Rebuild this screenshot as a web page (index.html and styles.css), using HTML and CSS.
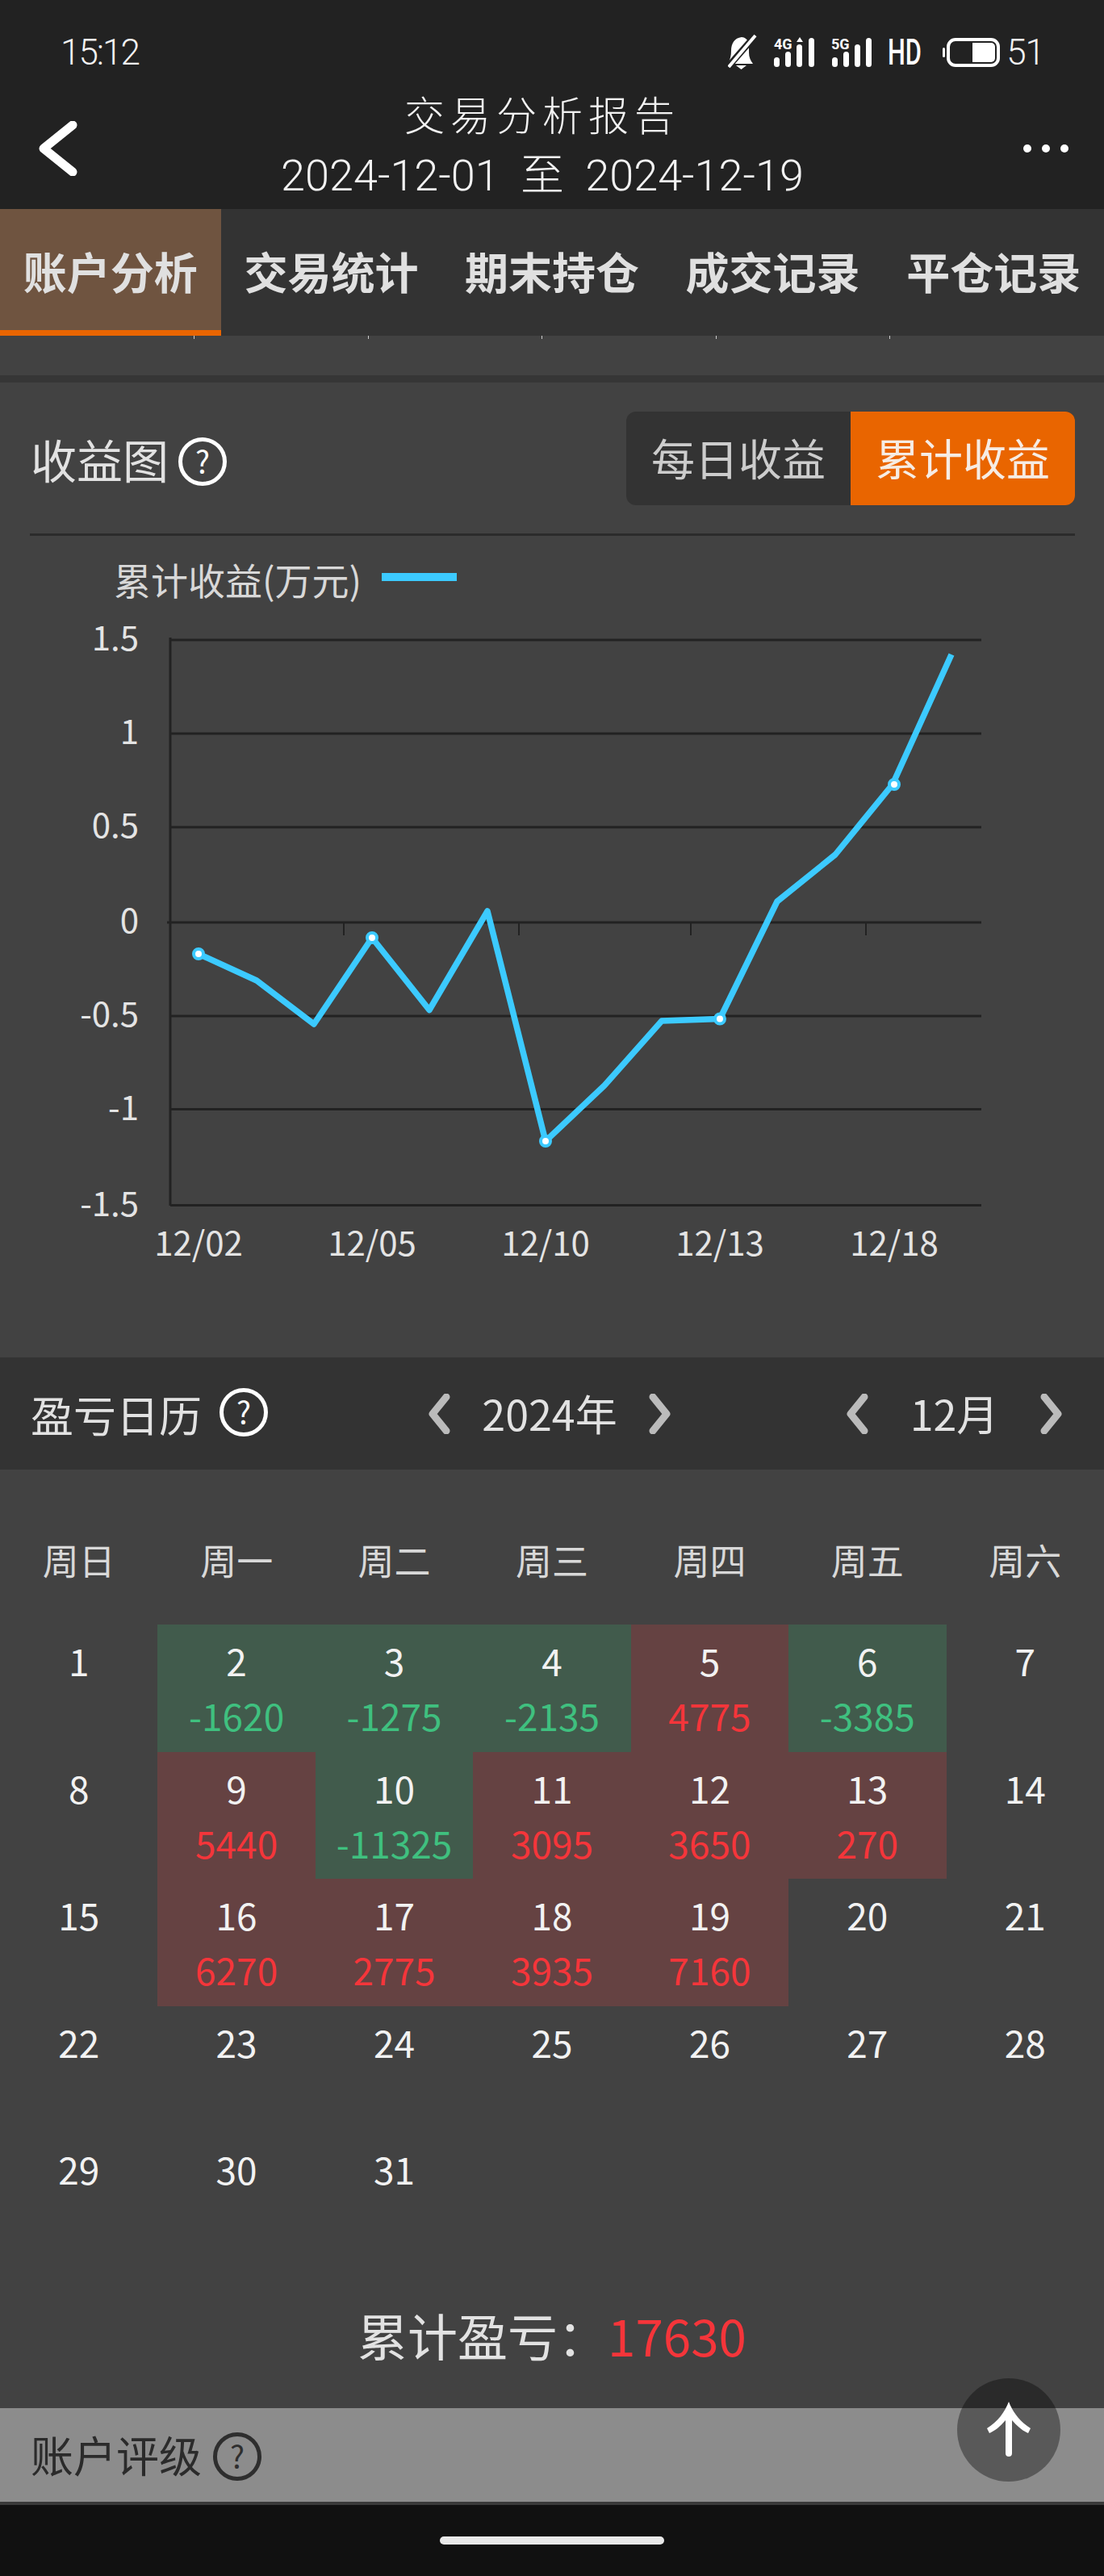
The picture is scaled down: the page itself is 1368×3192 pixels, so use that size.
FILE: index.html
```html
<!DOCTYPE html>
<html>
<head>
<meta name="viewport" content="width=device-width, initial-scale=1">
<link rel="stylesheet" href="styles.css">
</head>
<body>

<!-- Top bar -->
<header class="topbar">
  <div class="status">
    <span class="clock">15:12</span>
    <svg class="status-icons" viewBox="905 40 340 50" width="340" height="50">
      <path class="fill" d="M922 46c-9 1-13 8-13 17 0 6-1 10-4 16h31c-3-4-5-8-5-14l0-12c-2-4-5-7-9-7z"/>
      <path class="fill" d="M915 81h13l-6.500 5z"/>
      <path class="slash" d="M904 84l35-40"/>
      <path class="white-line" d="M906 83l33-39"/>
      <text class="tiny" x="962" y="61">4G</text>
      <path class="fill" d="M990 52l4-6 4 6z"/>
      <rect class="fill" x="962" y="71" width="7" height="12" rx="3.500"/>
      <rect class="fill" x="976" y="64" width="7" height="19" rx="3.500"/>
      <rect class="fill" x="990" y="55" width="7" height="28" rx="3.500"/>
      <rect class="fill" x="1005" y="47" width="7" height="36" rx="3.500"/>
      <text class="tiny" x="1033" y="61">5G</text>
      <rect class="fill" x="1034" y="71" width="7" height="12" rx="3.500"/>
      <rect class="fill" x="1048" y="64" width="7" height="19" rx="3.500"/>
      <rect class="fill" x="1062" y="55" width="7" height="28" rx="3.500"/>
      <rect class="fill" x="1076" y="47" width="7" height="36" rx="3.500"/>
      <text class="hd" x="1103" y="80" textLength="42" lengthAdjust="spacingAndGlyphs">HD</text>
      <rect class="fill" x="1171" y="59" width="3" height="12" rx="1.500"/>
      <rect class="batt" x="1178" y="49" width="62" height="32" rx="9"/>
      <path class="fill" d="M1208 53h23a5 5 0 0 1 5 5v14a5 5 0 0 1-5 5h-23z"/>
    </svg>
    <span class="batt-num">51</span>
  </div>
  <div class="nav">
    <svg class="back" viewBox="0 0 50 68" width="50" height="68"><path d="M44 5L8 34l36 29" /></svg>
    <div class="nav-title">
      <div class="title">交易分析报告</div>
      <div class="dates">2024-12-01&nbsp; 至 &nbsp;2024-12-19</div>
    </div>
    <div class="dots"><i></i><i></i><i></i></div>
  </div>
</header>

<nav class="tabs">
  <div class="tab active">账户分析</div>
  <div class="tab">交易统计</div>
  <div class="tab">期末持仓</div>
  <div class="tab">成交记录</div>
  <div class="tab">平仓记录</div>
</nav>
<div class="ticks"><i></i><i></i><i></i><i></i><i></i></div>
<div class="sep"></div>

<!-- Profit chart -->
<section class="chart-sec">
  <div class="sec-head">
    <div class="sec-title">收益图<span class="help">?</span></div>
    <div class="switch">
      <div class="sw">每日收益</div>
      <div class="sw on">累计收益</div>
    </div>
  </div>
  <div class="legend">累计收益(万元)<i></i></div>
  <svg class="chart" viewBox="0 760 1368 922" width="1368" height="922">
    <g class="grid">
      <path d="M211 793H1216"/>
      <path d="M211 909H1216"/>
      <path d="M211 1025H1216"/>
      <path d="M207 1143H1216"/>
      <path d="M211 1259H1216"/>
      <path d="M211 1374.500H1216"/>
      <path d="M211 1493.500H1216"/>
      <path d="M211 790V1494"/>
      <path class="thin" d="M426 1143V1159M643 1143V1159M856 1143V1159M1073 1143V1159"/>
    </g>
    <g class="ylab">
      <text x="172" y="806">1.5</text>
      <text x="172" y="922">1</text>
      <text x="172" y="1038">0.5</text>
      <text x="172" y="1156">0</text>
      <text x="172" y="1272">-0.5</text>
      <text x="172" y="1388">-1</text>
      <text x="172" y="1507">-1.5</text>
    </g>
    <g class="xlab">
      <text x="246" y="1556">12/02</text>
      <text x="461" y="1556">12/05</text>
      <text x="676" y="1556">12/10</text>
      <text x="892" y="1556">12/13</text>
      <text x="1108" y="1556">12/18</text>
    </g>
    <polyline class="line" points="246,1182 318,1215 389,1269 461,1162 532,1251.500 604,1129 676,1414 749,1345 820,1265 892,1262.500 963,1117 1035,1059 1106,972 1179,811"/>
    <circle class="pt" cx="246" cy="1182" r="6"/>
    <circle class="pt" cx="461" cy="1162" r="6"/>
    <circle class="pt" cx="676" cy="1414" r="6"/>
    <circle class="pt" cx="892" cy="1262.500" r="6"/>
    <circle class="pt" cx="1108" cy="972" r="6"/>
  </svg>
</section>

<!-- Calendar -->
<section class="cal-head">
  <div class="cal-title">盈亏日历<span class="help">?</span></div>
  <div class="picker year">
    <svg class="chev" viewBox="0 0 30 50"><path d="M25 4L8 25l17 21"/></svg>
    <span>2024年</span>
    <svg class="chev" viewBox="0 0 30 50"><path d="M5 4l17 21L5 46"/></svg>
  </div>
  <div class="picker month">
    <svg class="chev" viewBox="0 0 30 50"><path d="M25 4L8 25l17 21"/></svg>
    <span>12月</span>
    <svg class="chev" viewBox="0 0 30 50"><path d="M5 4l17 21L5 46"/></svg>
  </div>
</section>

<section class="cal-body">
  <div class="week">
    <div>周日</div><div>周一</div><div>周二</div><div>周三</div><div>周四</div><div>周五</div><div>周六</div>
  </div>
  <div class="days">
    <div class="day">1</div>
    <div class="day loss">2<b>-1620</b></div>
    <div class="day loss">3<b>-1275</b></div>
    <div class="day loss">4<b>-2135</b></div>
    <div class="day gain">5<b>4775</b></div>
    <div class="day loss">6<b>-3385</b></div>
    <div class="day">7</div>
    <div class="day">8</div>
    <div class="day gain">9<b>5440</b></div>
    <div class="day loss">10<b>-11325</b></div>
    <div class="day gain">11<b>3095</b></div>
    <div class="day gain">12<b>3650</b></div>
    <div class="day gain">13<b>270</b></div>
    <div class="day">14</div>
    <div class="day">15</div>
    <div class="day gain">16<b>6270</b></div>
    <div class="day gain">17<b>2775</b></div>
    <div class="day gain">18<b>3935</b></div>
    <div class="day gain">19<b>7160</b></div>
    <div class="day">20</div>
    <div class="day">21</div>
    <div class="day">22</div>
    <div class="day">23</div>
    <div class="day">24</div>
    <div class="day">25</div>
    <div class="day">26</div>
    <div class="day">27</div>
    <div class="day">28</div>
    <div class="day">29</div>
    <div class="day">30</div>
    <div class="day">31</div>
  </div>
  <div class="total">累计盈亏：<span>17630</span></div>
</section>

<section class="rating">
  <div class="rating-title">账户评级<span class="help dark">?</span></div>
</section>

<div class="to-top">
  <svg viewBox="0 0 60 68" width="60" height="68">
    <path d="M30 0c5 13 14 25 27 33l-3 6c-7-3-13-8-20-16v41a4 4 0 0 1-8 0V23C19 31 13 36 6 39l-3-6C16 25 25 13 30 0z"/>
  </svg>
</div>

<footer class="homebar"><i></i></footer>

</body>
</html>
```

FILE: styles.css
```css
* {box-sizing: border-box;}

body {
  margin: 0;
  height: 3192px;
  overflow: hidden;
  position: relative;
  background: #424242;
  color: #e2e2e2;
  font-family: "Noto Sans CJK SC", "Noto Sans", sans-serif;
}

/* Top bar */
.topbar {
  height: 259px;
  background: #222;
  color: #f2f2f2;
}

.status {
  height: 90px;
  display: flex;
  align-items: flex-start;
  padding: 40px 74px 0 75px;
}

.clock {
  font-family: Roboto, sans-serif;
  font-weight: 300;
  font-size: 44px;
  line-height: 50px;
  letter-spacing: -2px;
  margin-right: auto;
}

.status-icons .fill {fill: #fff;}
.status-icons .slash {stroke: #222; stroke-width: 8; fill: none;}
.status-icons .white-line {stroke: #fff; stroke-width: 4; fill: none;}
.status-icons .tiny {font: 700 18px "Roboto", sans-serif; fill: #fff;}
.status-icons .hd {font: 500 44px "Roboto", sans-serif; fill: #fff;}
.status-icons .batt {fill: none; stroke: #fff; stroke-width: 4;}

.batt-num {
  font-family: Roboto, sans-serif;
  font-weight: 300;
  font-size: 44px;
  line-height: 50px;
  letter-spacing: -1px;
  margin-left: 5px;
}

.nav {
  height: 169px;
  display: flex;
  align-items: center;
  padding: 0 44px 0 46px;
  position: relative;
}

.back {margin-top: 18px;}

.back path {
  fill: none;
  stroke: #fff;
  stroke-width: 11;
  stroke-linecap: round;
  stroke-linejoin: round;
}

.nav-title {
  flex: 1;
  align-self: flex-start;
  margin-top: 11px;
  text-align: center;
  padding-right: 20px;
}

.title {
  font-size: 50px;
  line-height: 78px;
  letter-spacing: 7px;
  font-weight: 300;
}

.dates {
  font-family: Roboto, "Noto Sans CJK SC", sans-serif;
  font-weight: 300;
  font-size: 54px;
  line-height: 78px;
}

.dots {
  display: flex;
  gap: 13px;
  margin-top: 18px;
}

.dots i {
  width: 10px;
  height: 10px;
  border-radius: 50%;
  background: #fff;
}

/* Tabs */
.tabs {
  display: flex;
  height: 157px;
  background: #333;
}

.tab {
  flex: 1;
  text-align: center;
  font-size: 54px;
  font-weight: 700;
  line-height: 80px;
  padding-top: 37px;
  color: #e0e0e0;
}

.tab.active {
  background: #6f5440;
  border-bottom: 7px solid #e96500;
}

.ticks {
  height: 49px;
  display: flex;
  gap: 214.600px;
  padding-left: 240px;
}

.ticks i {
  width: 1px;
  height: 4px;
  background: #ccc;
}

.sep {
  height: 9px;
  background: #363636;
}

/* Chart section */
.sec-head {
  margin: 0 36px 0 37px;
  padding-top: 36px;
  height: 190px;
  display: flex;
  justify-content: space-between;
  align-items: flex-start;
  border-bottom: 3px solid #2b2b2b;
}

.sec-title {
  display: flex;
  align-items: center;
  height: 116px;
  font-size: 57px;
  padding-left: 1px;
}

.sec-title .help {margin: 8px 0 0 12px;}

.help {
  display: inline-block;
  width: 60px;
  height: 60px;
  margin-left: 14px;
  border: 5px solid #fff;
  border-radius: 50%;
  text-align: center;
  font-size: 38px;
  line-height: 48px;
  color: #fff;
}

.help.dark {
  border-color: #2e2e2e;
  color: #2e2e2e;
  margin-top: 6px;
}

.switch {
  display: flex;
  height: 116px;
  border-radius: 12px;
  overflow: hidden;
  background: #333;
  font-size: 54px;
  line-height: 114px;
  text-align: center;
}

.sw {
  width: 278px;
  color: #ccc;
}

.sw.on {
  background: #e96500;
  color: #f6ece4;
}

.legend {
  height: 96px;
  padding: 30px 0 0 141px;
  font-size: 46px;
  line-height: 46px;
  display: flex;
  color: #d8d8d8;
}

.legend i {
  width: 93px;
  height: 10px;
  margin: 16px 0 0 25px;
  background: #3ccaff;
}

.chart {display: block;}
.grid path {stroke: #222; stroke-width: 3; fill: none;}
.grid path.thin {stroke-width: 2;}
.ylab text {font-size: 42px; text-anchor: end; fill: #e4e4e4;}
.xlab text {font-size: 42px; text-anchor: middle; fill: #e4e4e4;}
.line {fill: none; stroke: #3ccaff; stroke-width: 7.500; stroke-linejoin: round;}
.pt {fill: #fff; stroke: #3ccaff; stroke-width: 4;}

/* Calendar */
.cal-head {
  height: 139px;
  background: #333;
  display: flex;
  align-items: center;
  padding-left: 38px;
  font-size: 52px;
}

.cal-title {
  width: 490px;
  display: flex;
  align-items: center;
  font-size: 53px;
}

.cal-title .help {margin-left: 22px; margin-top: -4px;}

.picker {
  display: flex;
  align-items: center;
  justify-content: space-between;
}

.picker span {padding-bottom: 2px;}
.year {width: 306px;}
.month {width: 273px; margin-left: 212px;}

.chev {width: 30px; height: 50px;}
.chev path {
  fill: none;
  stroke: #bbb;
  stroke-width: 9;
  stroke-linecap: round;
  stroke-linejoin: round;
}

.cal-body {padding-top: 70px;}

.week {
  display: grid;
  grid-template-columns: repeat(7, 1fr);
  height: 122px;
  line-height: 84px;
  font-size: 45px;
  text-align: center;
  color: #d8d8d8;
}

.days {
  display: grid;
  grid-template-columns: repeat(7, 1fr);
  grid-auto-rows: 157.500px;
}

.day {
  padding-top: 10px;
  text-align: center;
  font-size: 46px;
  line-height: 68px;
  color: #f2f2f2;
}

.day b {
  display: block;
  font-weight: 400;
}

.day.gain {background: #654242;}
.day.gain b {color: #f5353a;}
.day.loss {background: #415b4c;}
.day.loss b {color: #3fc07f;}

.total {
  height: 183.500px;
  padding-top: 42.500px;
  line-height: 100px;
  font-size: 62px;
  text-align: center;
}

.total span {color: #f5353a;}

/* Rating bar */
.rating {
  height: 116px;
  background: #8c8c8c;
  padding: 0 38px 16px;
  display: flex;
  align-items: flex-end;
}

.rating-title {
  display: flex;
  align-items: center;
  height: 86px;
  font-size: 53px;
  color: #2b2b2b;
}

.rating-title .help {margin-left: 14px;}

/* Scroll to top button */
.to-top {
  position: absolute;
  left: 1186px;
  top: 2947px;
  width: 128px;
  height: 128px;
  border-radius: 50%;
  background: rgba(0,0,0,0.36);
  display: flex;
  align-items: center;
  justify-content: center;
}

.to-top path {fill: #fff;}

.to-top svg {margin-top: -2px;}

.homebar {
  height: 92px;
  background: #111;
  border-top: 4px solid #3a3a3a;
  display: flex;
  justify-content: center;
  padding-top: 39px;
}

.homebar i {
  width: 278px;
  height: 10px;
  border-radius: 5px;
  background: #e8e8e8;
}
```
